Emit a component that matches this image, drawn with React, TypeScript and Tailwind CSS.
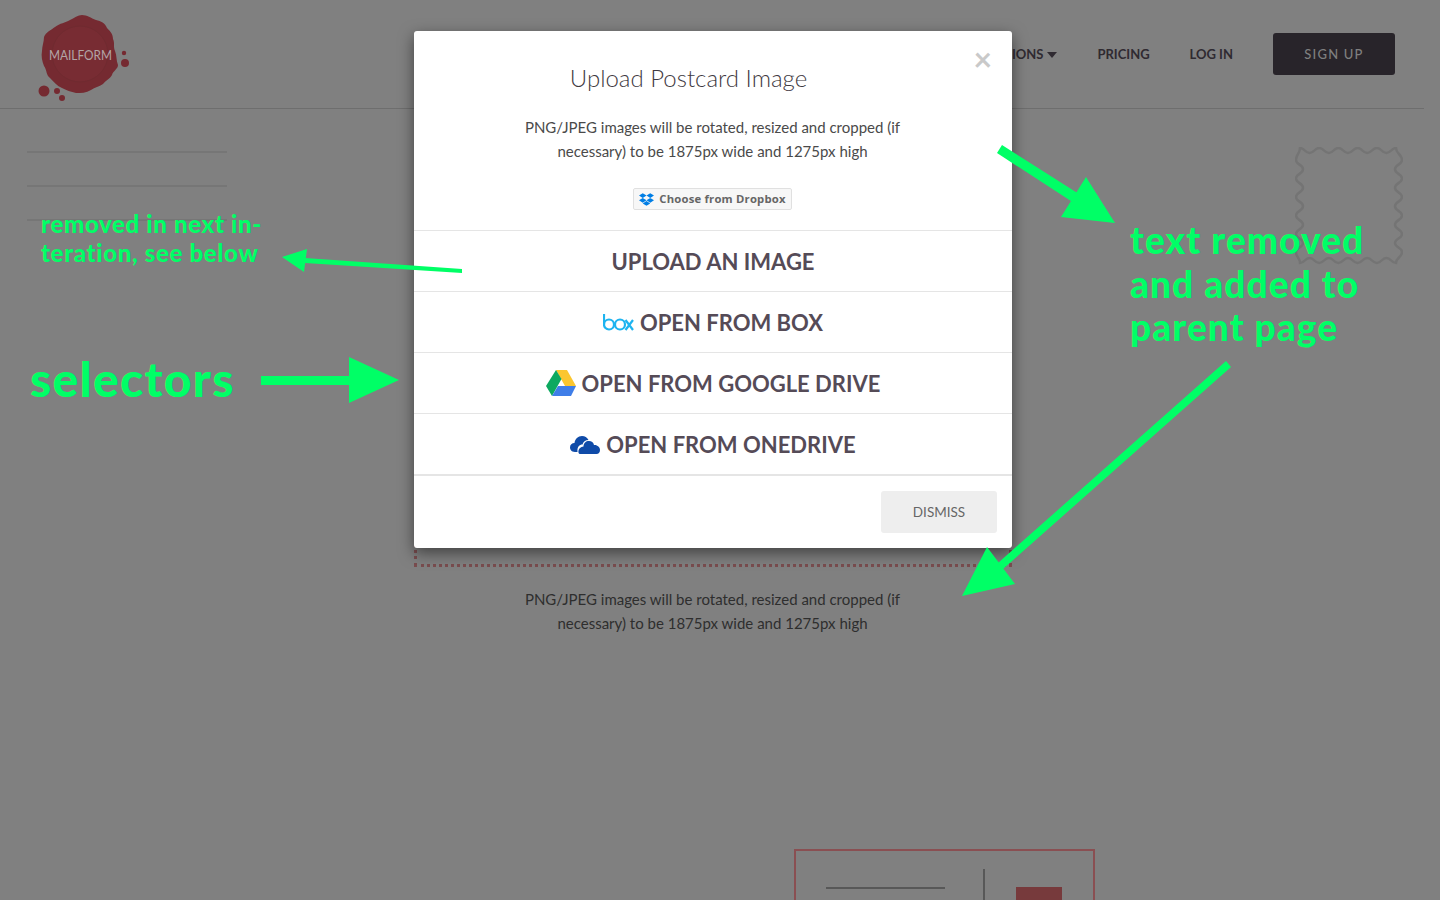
import React from "react";
import { FaDropbox } from "react-icons/fa";

function Logo() {
  return (
    <svg width="100" height="92" viewBox="0 0 100 92" className="shrink-0">
      <defs>
        <filter id="soft" colorInterpolationFilters="sRGB"><feGaussianBlur stdDeviation="0.5" /></filter>
      </defs>
      <g filter="url(#soft)">
        <path
          d="M49 0 C54 0 58 3 63 5 C68 6 72 8 74 13 C77 16 80 19 80 24 C82 28 80 32 82 36 C84 41 83 45 85 50 C85 54 80 56 79 60 C77 64 73 65 70 69 C66 72 62 72 58 75 C53 78 48 78 43 78 C38 77 33 75 29 73 C24 71 21 67 17 63 C13 60 14 55 11 51 C9 46 8 41 9 36 C9 31 11 27 11 22 C13 17 18 15 22 12 C27 8 32 8 37 5 C41 3 45 0 49 0 Z"
          fill="#752a31"
        />
        <circle cx="47" cy="39" r="28" fill="#782c33" stroke="#702a30" strokeWidth="1" />
        <circle cx="11" cy="76" r="5.5" fill="#752a31" />
        <circle cx="24" cy="76" r="3" fill="#752a31" />
        <circle cx="29" cy="83" r="3" fill="#752a31" />
        <circle cx="91" cy="38" r="2.2" fill="#752a31" />
        <circle cx="92" cy="48" r="4" fill="#752a31" />
      </g>
      <text x="47.5" y="44.5" textAnchor="middle" fontSize="13" fill="#b3a5a6" fontFamily="Lato, sans-serif" textLength="63" lengthAdjust="spacingAndGlyphs">
        MAILFORM
      </text>
    </svg>
  );
}

function Stamp() {
  const left = 5;
  const right = 101;
  const top = 1;
  const bottom = 116;
  const dips = 5;
  const sx = (right - left) / dips;
  const a = 5;
  const ys = [13, 31.5, 50, 68.5, 87, 105];
  const wave = (x0: number, y0: number, x1: number, y1: number) => {
    const dy = y1 - y0;
    return ` C${x0} ${y0 + dy * 0.5} ${x1} ${y1 - dy * 0.5} ${x1} ${y1}`;
  };
  let d = `M${left} ${top}`;
  for (let i = 0; i < dips; i++) {
    d += ` c${sx * 0.25} 0 ${sx * 0.25} ${a} ${sx / 2} ${a} c${sx * 0.25} 0 ${sx * 0.25} ${-a} ${sx / 2} ${-a}`;
  }
  let px = right;
  let py = top;
  for (let i = 0; i < ys.length; i++) {
    d += wave(px, py, 107, ys[i]);
    px = 107;
    py = ys[i];
    if (i < ys.length - 1) {
      const my = (ys[i] + ys[i + 1]) / 2;
      d += wave(px, py, 100, my);
      px = 100;
      py = my;
    }
  }
  d += wave(px, py, right, bottom);
  for (let i = 0; i < dips; i++) {
    d += ` c${-sx * 0.25} 0 ${-sx * 0.25} ${-a} ${-sx / 2} ${-a} c${-sx * 0.25} 0 ${-sx * 0.25} ${a} ${-sx / 2} ${a}`;
  }
  px = left;
  py = bottom;
  for (let i = ys.length - 1; i >= 0; i--) {
    d += wave(px, py, 1, ys[i]);
    px = 1;
    py = ys[i];
    if (i > 0) {
      const my = (ys[i] + ys[i - 1]) / 2;
      d += wave(px, py, 8, my);
      px = 8;
      py = my;
    }
  }
  d += wave(px, py, left, top) + " Z";
  return (
    <svg width="108" height="118" viewBox="0 0 108 118" className="block">
      <path d={d} fill="none" stroke="#747474" strokeWidth="2.5" />
    </svg>
  );
}

function BoxLogo() {
  return (
    <svg width="31" height="18" viewBox="0 0 31 18" className="shrink-0">
      <g fill="none" stroke="#1eb4f0" strokeWidth="2.2">
        <path d="M1 1 V11.5" />
        <circle cx="6" cy="11.5" r="5" />
        <circle cx="17" cy="11.5" r="5" />
        <path d="M22.5 7 L30 17 M30 7 L22.5 17" />
      </g>
    </svg>
  );
}

function DriveLogo() {
  return (
    <svg width="30" height="26" viewBox="0 0 30 26" className="shrink-0">
      <polygon points="10,0 21,0 30,16 19,16" fill="#fbc62f" />
      <polygon points="10,0 0,16 6,26 15.5,9" fill="#0da960" />
      <polygon points="6,26 25,26 30,16 12,16" fill="#3f7ee8" />
    </svg>
  );
}

function OneDriveLogo() {
  return (
    <svg width="30" height="19" viewBox="0 0 30 19" className="shrink-0">
      <path
        d="M5 17 C1 17 0 14 0 12.5 C0 9.5 2 8 4.5 8 C5 4 8 1 12 1 C15 1 17 2.5 18.5 5 C15.5 5 13 7 12.5 9.5 C9.5 9.5 7 11.5 7.5 17 Z"
        fill="#0f4ba8"
      />
      <path
        d="M10 19 C7.5 19 7.5 12 13.5 11.5 C13.5 8 16 6 19 6 C21.5 6 23.5 7.5 24 10 C27 9.5 30 12 30 15 C30 17.5 28.5 19 26.5 19 Z"
        fill="#0f4ba8"
      />
    </svg>
  );
}

function SourceRow({ icon, label }: { icon?: React.ReactNode; label: string }) {
  return (
    <div className="flex h-[61px] items-center justify-center gap-[6px] border-b border-[#e5e5e5] text-[22px] font-bold leading-none text-[#554b57]">
      {icon}
      <span className="pt-[2px]">{label}</span>
    </div>
  );
}

function Annotations() {
  return (
    <>
      <svg width="1440" height="900" viewBox="0 0 1440 900" className="pointer-events-none absolute left-0 top-0">
        <g fill="#00ff66">
          <polygon points="1002,145 1079,194 1074,203 997,153" />
          <polygon points="1115,223 1086,177 1061,217" />
          <polygon points="305,258 462,269 462,273 305,263" />
          <polygon points="282,257 307,249 304,272" />
          <rect x="261" y="376" width="90" height="9" />
          <polygon points="349,357 349,403 399,380" />
          <polygon points="1226,361 1231,367 1003,569 998,563" />
          <polygon points="962,596 987,547 1015,584" />
        </g>
      </svg>
      <div className="absolute left-[41px] top-[209px] text-[24px] font-black leading-[29px] tracking-[0.67px] text-[#00ff66]">
        removed in next in-
        <br />
        teration, see below
      </div>
      <div className="absolute left-[30px] top-[349px] text-[48px] font-black leading-[60px] tracking-[1.3px] text-[#00ff66]">selectors</div>
      <div className="absolute left-[1130px] top-[218px] text-[37px] font-black leading-[43.5px] tracking-[1.1px] text-[#00ff66]">
        text removed
        <br />
        and added to
        <br />
        parent page
      </div>
    </>
  );
}

export default function App() {
  return (
    <div className="relative h-[900px] w-[1440px] overflow-hidden bg-[#808080] font-['Lato',sans-serif]">
      <header className="flex h-[109px] w-[1424px] items-start justify-between border-b border-[#6e6e6e] pl-[33px] pr-[29px] pt-[15px]">
        <Logo />
        <nav className="flex items-center gap-10 pt-[18px] text-[13px] font-bold text-[#2f2a31]">
          <span className="flex items-center gap-1 pt-[2px]">
            OPTIONS
            <span className="h-0 w-0 border-x-[5px] border-t-[6px] border-x-transparent border-t-[#2f2a31]" />
          </span>
          <span className="pt-[2px]">PRICING</span>
          <span className="pt-[2px]">LOG IN</span>
          <span className="flex h-[42px] w-[122px] items-center justify-center rounded-[3px] bg-[#28242a] pt-[2px] font-medium tracking-[1.2px] text-[#7f7f7f]">
            SIGN UP
          </span>
        </nav>
      </header>

      <main className="flex">
        <div className="flex w-[414px] shrink-0 flex-col gap-[32px] pl-[27px] pt-[42px]">
          <div className="h-[2px] w-[200px] bg-[#767676]" />
          <div className="h-[2px] w-[200px] bg-[#767676]" />
          <div className="h-[2px] w-[200px] bg-[#767676]" />
        </div>
        <div className="w-[598px] shrink-0 pt-[224px]">
          <div className="h-[234px] border-[3px] border-dotted border-[#7a4d4f]" />
          <p className="mt-[20px] pr-[1px] text-center text-[15px] leading-[24px] text-[#2e2e2e]">
            PNG/JPEG images will be rotated, resized and cropped (if
            <br />
            necessary) to be 1875px wide and 1275px high
          </p>
          <div className="relative ml-[380px] mt-[214px] h-[60px] w-[301px] shrink-0 border-[2px] border-b-0 border-[#8a4f52]">
            <div className="absolute left-[30px] top-[36px] h-[2px] w-[119px] bg-[#585858]" />
            <div className="absolute left-[187px] top-[18px] h-[40px] w-[2px] bg-[#585858]" />
            <div className="absolute left-[220px] top-[36px] h-[30px] w-[46px] bg-[#773a3c]" />
          </div>
        </div>
        <div className="pl-[283px] pt-[38px]">
          <Stamp />
        </div>
      </main>

      {/* modal */}
      <div className="absolute left-[414px] top-[31px] h-[517px] w-[598px] overflow-hidden rounded-[3px] bg-white shadow-[0_5px_15px_rgba(0,0,0,0.5)]">
        <div className="relative h-[199px] text-center">
          <span className="absolute right-[20px] top-[10px] text-[32px] font-bold leading-[36px] text-[#c9c9c9]">×</span>
          <h2 className="pr-[49px] pt-[30px] text-[24px] font-light leading-[34px] text-[#3f3a42]">Upload Postcard Image</h2>
          <p className="mt-[20px] pr-[1px] text-[15px] leading-[24px] text-[#4a4a4a]">
            PNG/JPEG images will be rotated, resized and cropped (if
            <br />
            necessary) to be 1875px wide and 1275px high
          </p>
          <div className="mt-[25px] flex justify-center pr-[1px]">
            <div className="flex h-[22px] w-[159px] items-center justify-center gap-[5px] rounded-[2px] border border-[#e0e0e0] bg-[#f7f7f7] font-['Open_Sans',sans-serif] text-[11.3px] font-bold tracking-[0.2px] text-[#666666]">
              <FaDropbox className="text-[#007ee5]" size={15} />
              <span>Choose from Dropbox</span>
            </div>
          </div>
        </div>
        <div className="border-t border-[#e5e5e5]">
          <SourceRow label="UPLOAD AN IMAGE" />
          <SourceRow icon={<BoxLogo />} label="OPEN FROM BOX" />
          <SourceRow icon={<DriveLogo />} label="OPEN FROM GOOGLE DRIVE" />
          <SourceRow icon={<OneDriveLogo />} label="OPEN FROM ONEDRIVE" />
        </div>
        <div className="flex justify-end border-t border-[#e5e5e5] pr-[15px] pt-[15px]">
          <div className="flex h-[42px] w-[116px] items-center justify-center rounded-[3px] bg-[#eeeeee] text-[13.5px] text-[#666666]">
            DISMISS
          </div>
        </div>
      </div>

      <Annotations />
    </div>
  );
}
